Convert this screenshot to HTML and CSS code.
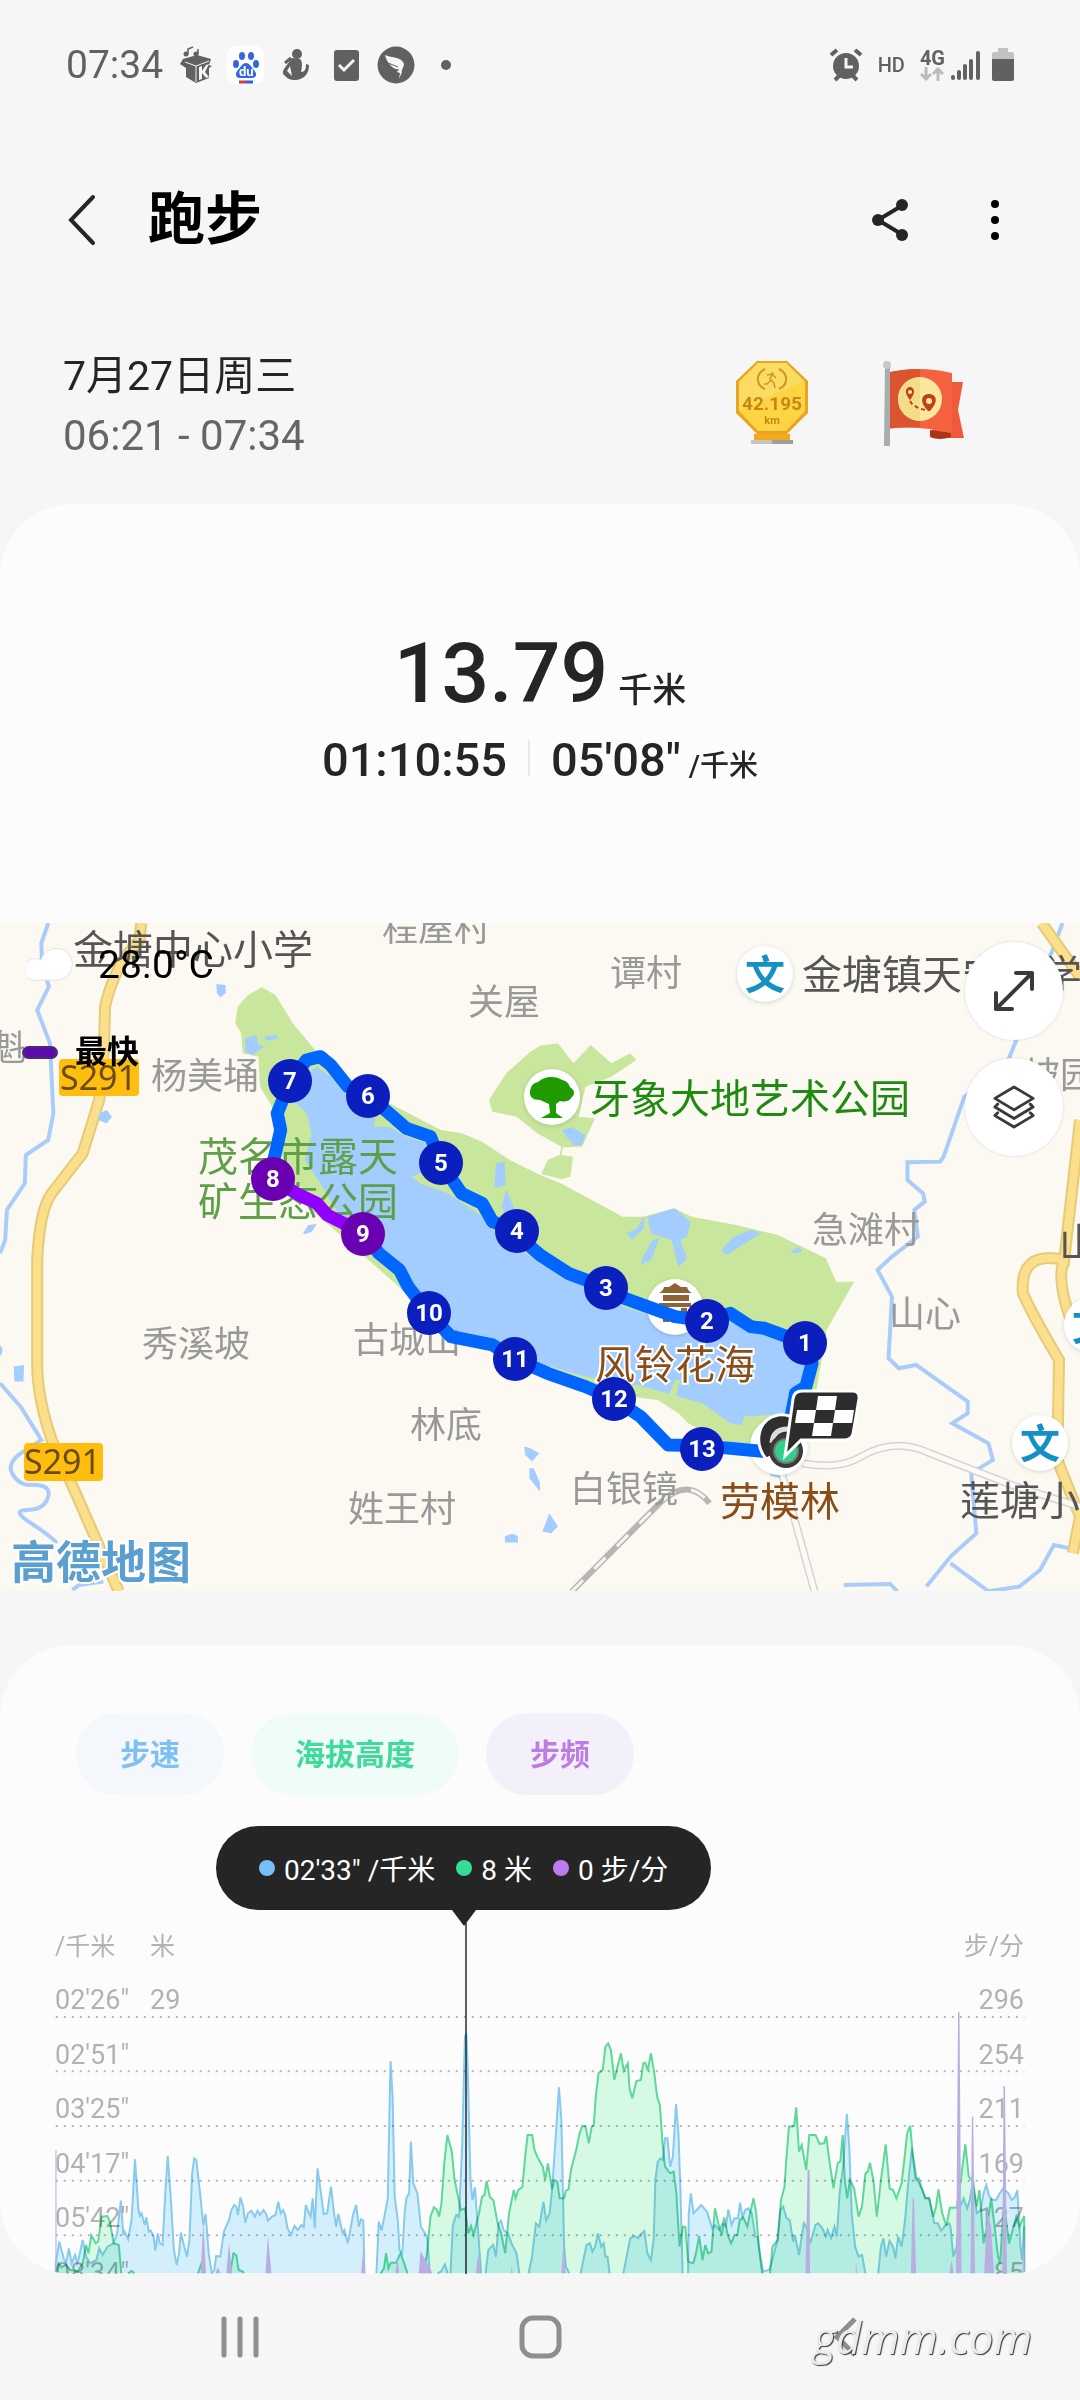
FILE: index.html
```html
<!DOCTYPE html>
<html lang="zh-CN">
<head>
<meta charset="utf-8">
<meta name="viewport" content="width=device-width, initial-scale=1">
<title>跑步</title>
<link rel="stylesheet" href="styles.css">
</head>
<body>
<div class="status">
  <span class="clock">07:34</span>
  <div class="notices">
    <svg viewBox="0 0 40 40"><g fill="#616161"><path d="M7 14l14-4 14 4-2 6 3 1-3 2v10l-13 5-10-6V23l-6-4z"/><circle cx="10" cy="9" r="2.500"/><circle cx="20" cy="9" r="2.500"/></g><path d="M12 9V4l5-2M22 9V4" fill="none" stroke="#616161" stroke-width="1.500"/><path d="M9 17l11 4 13-5M20 21v16" fill="none" stroke="#f6f6f6" stroke-width="1"/><path d="M23 22l3-1v5l4-6 3-1-4 8 4 5-3 1-4-5v6l-3 1z" fill="#f6f6f6"/></svg>
    <svg viewBox="0 0 40 40"><rect x="1" y="1" width="37" height="38" rx="9" fill="#fff"/><g fill="#3366e0"><ellipse cx="10" cy="19" rx="3" ry="4"/><ellipse cx="16" cy="11" rx="3" ry="4"/><ellipse cx="25" cy="11" rx="3" ry="4"/><ellipse cx="30" cy="19" rx="3" ry="4"/><path d="M20 18c4 0 5 4 8 7s3 8-2 8H14c-5 0-5-5-2-8s4-7 8-7z"/></g><text x="13" y="31" class="du">du</text><path d="M13 37h7" stroke="#d23c3c" stroke-width="3"/><path d="M20 37h7" stroke="#3b5fd0" stroke-width="3"/></svg>
    <svg viewBox="0 0 40 40" fill="#616161"><circle cx="21" cy="9" r="5"/><path d="M16 13l8 1c3 3 2 8 1 13 4 0 5-3 5-8l3 1c0 8-4 14-13 15-7 0-9-2-12-5-2-2-1-4 0-6z"/><path d="M9 18l6-5" stroke="#616161" stroke-width="3"/><path d="M14 21l-3 5 5 5z" fill="#f6f6f6"/></svg>
    <svg viewBox="0 0 40 40"><rect x="8" y="5" width="25" height="31" rx="3" fill="#616161"/><path d="M13 20l5 5 10-10" fill="none" stroke="#f6f6f6" stroke-width="3"/></svg>
    <svg viewBox="0 0 40 40"><circle cx="20" cy="20" r="18.500" fill="#616161"/><path d="M9 10c7 3 17 2 19 9 0 3-3 6-2 8l-3 7 1-6-3-1 1-2c-6-2-11-7-13-15z" fill="#f6f6f6"/><path d="M12 18l10 4M15 24l8 1" stroke="#616161" stroke-width="1"/></svg>
    <svg viewBox="0 0 40 40"><circle cx="20" cy="20" r="5" fill="#616161"/></svg>
  </div>
  <div class="signals">
    <svg class="alarm" viewBox="0 0 34 34"><g fill="#616161"><circle cx="17" cy="18" r="13"/></g><path d="M2 7l6-5M26 2l6 5M6 32l4-4M28 32l-4-4" stroke="#616161" stroke-width="4"/><path d="M17 10v9h7" fill="none" stroke="#f6f6f6" stroke-width="3"/></svg>
    <span>HD</span>
    <div class="net"><span>4G</span><svg viewBox="0 0 24 14"><path d="M6 0v12M1 7l5 5 5-5M18 14V2M13 7l5-5 5 5" fill="none" stroke="#bbb" stroke-width="3"/></svg></div>
    <svg class="bars" viewBox="0 0 30 30"><path d="M2 27v1M8 22v6M14 16v12M20 11v17M27 3v25" stroke="#616161" stroke-width="4" stroke-linecap="round"/></svg>
    <svg class="battery" viewBox="0 0 22 34"><path d="M6 0h10v4h4q2 0 2 2v6H0V6q0-2 2-2h4z" fill="#c2c2c2"/><path d="M0 11h22v20q0 2-2 2H2q-2 0-2-2z" fill="#616161"/></svg>
  </div>
</div>

<header class="bar">
  <button class="icon" aria-label="返回"><svg viewBox="0 0 30 52"><path d="M26 3L4 26l22 23" fill="none" stroke="#252525" stroke-width="4" stroke-linecap="round"/></svg></button>
  <h1>跑步</h1>
  <button class="icon share" aria-label="分享"><svg viewBox="0 0 40 46"><path d="M33 8L8 23l25 15" fill="none" stroke="#252525" stroke-width="4"/><g fill="#252525"><circle cx="32" cy="8" r="6"/><circle cx="8" cy="23" r="6"/><circle cx="32" cy="38" r="6"/></g></svg></button>
  <button class="icon more" aria-label="更多"><svg viewBox="0 0 10 46"><circle cx="5" cy="7" r="4"/><circle cx="5" cy="23" r="4"/><circle cx="5" cy="39" r="4"/></svg></button>
</header>

<section class="when">
  <div>
    <p class="date">7月27日周三</p>
    <p class="span">06:21 - 07:34</p>
  </div>
  <svg class="badge" viewBox="0 0 84 90">
    <path d="M22 76h36v6H22z" fill="#f5a81c"/><path d="M19 82h42v4H19z" fill="#9e9e9e"/><path d="M19 82h21v4H19z" fill="#c4c4c4"/>
    <path d="M25 3h30l21 20v32L55 76H25L4 55V23z" fill="#e9a520"/><path d="M26 5h28l19 19v29L54 73H26L7 53V24z" fill="#fdd443"/><path d="M26 5h28l18 18L7 52V24z" fill="#fbdc62"/>
    <g fill="none" stroke="#d0961e" stroke-width="2"><path d="M33 11c-10 5-9 16 0 20M47 11c10 5 9 16 0 20"/><path d="M41 14l-3 7 4 4 1 5M39 22l-4 4h-3M35 17l5-1 4 4" stroke-width="1.500"/></g>
    <text x="40" y="52" class="km-big">42.195</text><text x="40" y="66" class="km">km</text>
  </svg>
  <svg class="badge" viewBox="0 0 84 90">
    <path d="M68 24h15l-5 28 6 28H52v-7z" fill="#f0593a"/><path d="M50 72l21 3v4q-12 4-21 0z" fill="#a83518"/>
    <path d="M6 15q32-8 66 0v60q-34-8-66-4z" fill="#f5623f"/><path d="M6 15q17-4 34-4v58q-20-1-34 2z" fill="#d9542f"/>
    <circle cx="40" cy="41" r="22" fill="#fbe7a0"/><path d="M40 19a22 22 0 0 0 0 44z" fill="#f3dc8a"/>
    <g fill="#bf3f17"><path d="M30 42c-8-10-2-13 0-13s8 3 0 13zM48 53c-11-12-4-17 1-17s12 5 1 17z"/></g><circle cx="30" cy="34" r="2" fill="#fbe7a0"/><circle cx="49" cy="43" r="3" fill="#fbe7a0"/><path d="M30 43q3 6 15 9" fill="none" stroke="#bf3f17" stroke-width="2" stroke-dasharray="4 3"/>
    <path d="M5 6h5v82H4z" fill="#a9adb0"/><circle cx="7" cy="7" r="4" fill="#c4c8ca"/>
  </svg>
</section>

<main>
<section class="summary">
  <p class="distance"><b>13.79</b><span>千米</span></p>
  <p class="pace"><b>01:10:55</b><i></i><b>05'08"</b><span>/千米</span></p>
</section>

<section class="map">
  <svg class="canvas" viewBox="0 0 1080 668" preserveAspectRatio="xMidYMid slice">
    <defs>
      <path id="r1" d="M410 69L405 120Q330 200 305 320L302 450 288 600 240 760 150 880Q115 930 108 1080V1400Q110 1500 150 1620L220 1780 345 2075"/>
      <path id="r2" d="M3025 69L3136 230M3136 660L3090 1080Q2960 1050 2970 1180 3000 1250 3075 1380L3070 1680 3136 1850 3115 1960M3090 1080Q3060 1150 3136 1330"/>
    </defs>
    <g class="terrain" transform="scale(.3444 .3333) translate(0 -69)">
      <g class="river">
        <path d="M140 69L120 130 122 190 142 260 108 330 145 430 155 640 140 720 75 765 72 850 20 930 15 1020 0 1060M0 1450L60 1520 120 1620 60 1660Q20 1690 35 1720T80 1755Q150 1750 140 1790T80 1830 90 1870 165 1930M210 2070L230 2055 300 2045"/>
        <path d="M3085 69L3060 140 2920 500 2800 590 2740 770 2730 785 2635 787 2635 840 2680 880 2685 905 2655 930 2665 1010 2590 1070 2548 1110 2590 1190 2580 1375 2610 1405 2660 1395 2810 1505 2810 1540 2765 1570 2870 1630 2883 1680 2820 1720 2835 1900 2760 1970 2690 2060M2760 1990L2870 2074 2960 2060 3020 2010 3060 1935 3130 1950M2450 2055L2585 2052 2605 2074"/>
      </g>
      <g class="road edge"><use href="#r1"/><use href="#r2"/></g>
      <g class="road"><use href="#r1"/><use href="#r2"/></g>
      <path class="path" d="M2270 1720L2365 2074M2330 1690Q2440 1710 2500 1670 2600 1610 2700 1660L2950 1760 3136 1820"/><path class="path core" d="M2270 1720L2365 2074M2330 1690Q2440 1710 2500 1670 2600 1610 2700 1660L2950 1760 3136 1820"/>
      <path class="rail" d="M1660 2075L1920 1805Q2000 1730 2060 1810"/><path class="rail dash" d="M1660 2075L1920 1805Q2000 1730 2060 1810"/>
      <path class="park" d="M760 262L800 285 850 370 915 450 1000 540 1280 690 1340 700 1400 725 1480 780 1568 825 1628 850 1808 950 1868 950 1958 925 2008 950 2138 975 2258 1005 2398 1075 2428 1145 2480 1145 2400 1290 2340 1660 2250 1670 2080 1615 1998 1570 1970 1540 1910 1500 1830 1490 1700 1440 1300 1290 840 870 790 620 755 560 750 470 705 460 700 400 683 370 690 320 720 285z"/>
      <path class="park" d="M1568 437L1620 430 1665 490 1715 435 1775 490 1830 460 1848 480 1775 530 1700 560 1680 650 1728 655 1690 740 1635 742 1630 765 1664 770 1656 830 1630 838 1572 822 1590 780 1625 765 1630 740 1560 700 1500 650 1430 635 1420 600 1470 520 1540 455z"/>
      <path class="lake" d="M905 510L920 500 960 530 1010 590 1060 640 1090 655 1085 680 1130 680 1180 710 1240 730 1220 770 1250 810 1195 830 1220 850 1300 880 1400 950 1430 990 1500 1040 1568 1090 1700 1150 1810 1220 1950 1265 2130 1240 2200 1300 2280 1310 2350 1400 2310 1540 2160 1550 2155 1575 2120 1570 2040 1510 1850 1455 1700 1430 1568 1390 1430 1330 1290 1290 1200 1170 1100 1050 1000 970 930 850 885 780 905 700 890 640 850 600 880 540z"/>
      <path class="lake" d="M712 415L745 405 750 432 765 440 735 465 712 455zM765 410L800 405 810 415 775 422zM628 252L655 255 655 280 640 292 630 280zM288 640L310 630 325 650 310 670 285 660zM880 1000L895 975 920 972 905 995 885 1003zM1440 790L1465 785 1468 855 1435 865zM1470 870L1495 930 1470 950 1455 920zM1630 690L1660 682 1700 705 1690 735 1665 735zM1880 950L1958 925 2005 965 1995 1010 1975 1020 1995 1075 1970 1100 1950 1020 1920 1010 1890 1000zM1820 1000L1850 985 1870 950 1870 985 1835 1018zM1895 1020L1915 1015 1890 1080 1860 1095 1865 1075zM2095 1050L2130 1010 2180 990 2210 1000 2140 1045 2110 1065zM2295 1055L2320 1040 2330 1055 2305 1060z"/>
      <path class="lake" d="M40 1400L70 1395 68 1445 42 1445zM1522 1640L1540 1645 1566 1660 1545 1685 1525 1665zM1537 1705L1550 1705 1568 1750 1568 1775 1537 1735zM1466 1910Q1490 1895 1504 1910V1928H1466zM1575 1895L1595 1840 1620 1880 1600 1900zM0 1335Q15 1350 0 1370zM2220 1700L2260 1700 2265 1735 2240 1728z"/>
      <path class="park" d="M1960 1440L1975 1440 1960 1500 1940 1490z"/>
    </g>

    <g class="village">
      <text x="382" y="18">程屋村</text><text x="468" y="92">关屋</text><text x="-10" y="138">魁</text><text x="151" y="166">杨美埇</text><text x="610" y="63">谭村</text><text x="812" y="320">急滩村</text><text x="1024" y="165">坡园</text><text x="889" y="404">山心</text><text x="142" y="434">秀溪坡</text><text x="353" y="430">古城山</text><text x="410" y="515">林底</text><text x="348" y="599">姓王村</text><text x="570" y="579">白银镜</text>
    </g>
    <g class="poi">
      <text x="73" y="41">金塘中心小学</text><text x="802" y="66">金塘镇天宁小学</text><text x="1059" y="334">山</text><text x="960" y="592">莲塘小学</text>
      <text class="green" x="590" y="190">牙象大地艺术公园</text><text class="pale" x="198" y="248">茂名市露天</text><text class="pale" x="198" y="293">矿生态公园</text>
      <text class="brown" x="720" y="593">劳模林</text>
    </g>
    <rect x="59" y="136" width="80" height="37" rx="4" fill="#fdbe10"/><rect x="24" y="520" width="79" height="38" rx="4" fill="#fdbe10"/>
    <text class="roadno" x="60" y="167">S291</text><text class="roadno" x="24" y="551">S291</text>
    <g fill="#fff" class="disc"><circle cx="765" cy="51" r="28"/><circle cx="1040" cy="520" r="28"/><circle cx="1092" cy="402" r="28"/><circle cx="552" cy="174" r="28"/><circle cx="675" cy="384" r="28"/><circle cx="779" cy="523" r="29"/></g>
    <g class="school"><text x="745" y="66">文</text><text x="1020" y="535">文</text><text x="1072" y="417">文</text></g>
    <path d="M540 177q-11 0-10-9 1-8 8-9 6-5 13-5t11 3q6 1 8 7 7 5 2 10-4 6-12 4l-4 3v9l7 5h-22l9-5-1-9z" fill="#1f9a00"/>
    <path d="M659 370q4-2 5-6h5l6-4 6 4h6q1 4 5 6zM663 372h26v6h-26zM659 380h32v4h-32zM663 385h6v14h-6zM681 385h6v14h-6z" fill="#8f6238"/>
    <text class="poi brown halo" x="595" y="456">风铃花海</text>
    <text class="brand halo" x="11" y="656">高德地图</text>

    <g class="route" transform="scale(.3444 .3333) translate(0 -69)">
      <path d="M2280 1640L2310 1480 2340 1460 2358 1390 2338 1330 2220 1285 2180 1280 2120 1240 2054 1263 1960 1250 1880 1220 1800 1190 1761 1163 1650 1120 1568 1065 1540 1040 1502 993 1430 965 1400 910 1340 880 1281 790 1250 710 1180 685 1130 640 1070 588 1010 560 960 495 930 470 890 480 843 543 805 640 815 690 795 780 793 837"/>
      <path d="M1055 1000L1100 1060 1160 1110 1185 1160 1245 1240 1310 1310 1430 1335 1495 1377 1590 1420 1700 1460 1783 1497 1860 1550 1940 1635 2038 1637 2220 1655"/>
      <path class="fast" d="M793 837L860 880 920 910 950 945 1055 1000"/>
    </g>
    <g class="pins">
      <circle cx="805" cy="420" r="22"/><circle cx="707" cy="398" r="22"/><circle cx="606" cy="365" r="22"/><circle cx="517" cy="308" r="22"/><circle cx="441" cy="240" r="22"/><circle cx="368" cy="173" r="22"/><circle cx="290" cy="158" r="22"/><circle class="fast" cx="273" cy="256" r="22"/><circle class="fast" cx="363" cy="311" r="22"/><circle cx="429" cy="390" r="22"/><circle cx="515" cy="436" r="22"/><circle cx="614" cy="476" r="22"/><circle cx="702" cy="526" r="22"/>
      <text x="805" y="428">1</text><text x="707" y="406">2</text><text x="606" y="373">3</text><text x="517" y="316">4</text><text x="441" y="248">5</text><text x="368" y="181">6</text><text x="290" y="166">7</text><text x="273" y="264">8</text><text x="363" y="319">9</text><text x="429" y="398">10</text><text x="515" y="444">11</text><text x="614" y="484">12</text><text x="702" y="534">13</text>
    </g>
    <path d="M766 536c-13-17-8-40 12-44 15-2 27 9 29 25z" fill="#2f2f2f" stroke="#fff" stroke-width="3"/>
    <path d="M772 520q1-14 16-14" fill="none" stroke="#ddd" stroke-width="5"/>
    <circle cx="786" cy="528" r="17" fill="#3a3a3a"/><circle cx="786" cy="528" r="12" fill="#2fd08a" stroke="#777" stroke-width="2"/>
    <path d="M802 468h50q8 0 7 8l-6 35q-2 6-9 6h-43l-16 16 8-57q1-8 9-8z" fill="#2d2d2d" stroke="#fff" stroke-width="3"/>
    <path d="M818 473h19l-2 14h-19zM797 487h19l-2 13h-19zM835 487h19l-2 13h-19zM814 500h19l-2 13h-19z" fill="#fff"/>
  </svg>

  <div class="weather"><svg viewBox="0 0 46 34"><path d="M12 32a11 11 0 1 1 2-20 16 16 0 1 1 18 20z" fill="#fff" stroke="#e3e3e3"/></svg><span>28.0°C</span></div>
  <div class="legend"><i></i><span>最快</span></div>
  <div class="tools">
    <button aria-label="全屏"><svg viewBox="0 0 44 44"><path d="M4 40L40 4M24 4h16v16M4 24v16h16" fill="none" stroke="#3a3a3a" stroke-width="4" stroke-linecap="round" stroke-linejoin="round"/></svg></button>
    <button aria-label="图层"><svg viewBox="0 0 44 46"><path d="M22 2l20 12-20 12L2 14zM5 20l-3 3 20 12 20-12-3-3M5 29l-3 3 20 12 20-12-3-3" fill="none" stroke="#3a3a3a" stroke-width="3" stroke-linejoin="round" stroke-linecap="round"/></svg></button>
  </div>
</section>

<section class="trends">
  <div class="chips">
    <button class="speed">步速</button><button class="height">海拔高度</button><button class="cadence">步频</button>
  </div>
  <div class="plot">
    <div class="row units"><span>/千米</span><span>米</span><span>步/分</span></div>
    <div class="ticks">
      <div class="row"><span>02'26"</span><span>29</span><span>296</span></div>
      <div class="row"><span>02'51"</span><span></span><span>254</span></div>
      <div class="row"><span>03'25"</span><span></span><span>211</span></div>
      <div class="row"><span>04'17"</span><span></span><span>169</span></div>
      <div class="row"><span>05'42"</span><span></span><span>127</span></div>
      <div class="row"><span>08'34"</span><span></span><span>85</span></div>
    </div>
    <svg class="series" viewBox="0 0 3136 882" preserveAspectRatio="none">
      <path class="gridline" d="M162 111H2974M162 274H2974M162 438H2974M162 602H2974M162 766H2974"/>
      <g class="alt">
        <path d="M162 880L170 850 178 862 190 855 205 870 225 875 240 850 250 795 257 820 265 765 278 790 285 785 295 710 312 708 320 730 330 790 345 795 352 880M372 880L382 873 390 880M575 880L585 850 592 880M668 880L678 820 686 825 693 870 705 875 708 880M1105 880L1115 865 1121 820 1128 865 1135 848 1150 848 1163 820 1172 845 1183 880"/>
        <path d="M1230 880L1240 820 1250 710 1260 682 1268 688 1275 710 1282 670 1290 550 1299 465 1312 515 1320 600 1330 650 1338 690 1350 685 1360 760 1368 738 1375 765 1390 705 1400 650 1407 645 1413 603 1422 650 1433 662 1445 730 1455 760 1467 820 1478 700 1490 640 1492 630 1497 655 1505 630 1517 620 1525 530 1532 465 1545 465 1552 510 1560 530 1568 545 1576 560 1583 600 1591 550 1603 628 1610 600 1618 605 1625 655 1638 655 1643 632 1651 628 1658 570 1673 510 1683 460 1691 438 1700 440 1710 490 1718 440 1724 436 1730 350 1738 280 1750 270 1758 200 1766 190 1774 210 1784 300 1793 260 1803 220 1811 272 1823 250 1828 325 1836 355 1848 303 1861 300 1868 250 1874 248 1881 272 1890 220 1900 280 1908 350 1916 375 1923 480 1931 560 1946 580 1956 575 1964 640 1973 800 1983 740 1990 740 1998 845 2013 850 2021 820 2030 768 2040 840 2048 795 2056 820 2066 815 2076 685 2088 740 2096 765 2103 712 2113 765 2123 790 2133 765 2141 765 2148 720 2158 712 2170 740 2178 700 2188 655 2196 700 2203 800 2213 880"/>
        <path d="M2236 880L2243 800 2258 780 2268 660 2278 620 2283 540 2291 440 2306 438 2312 382 2320 515 2328 495 2341 570 2350 465 2368 465 2380 492 2393 490 2399 468 2408 540 2420 625 2433 548 2440 545 2447 465 2453 600 2460 655 2468 600 2480 625 2493 710 2503 680 2513 580 2520 575 2526 548 2536 600 2546 710 2558 600 2572 493 2583 625 2593 630 2603 655 2618 610 2628 520 2634 460 2643 438 2650 520 2660 590 2678 630 2686 655 2698 655 2710 710 2718 680 2725 628 2736 700 2748 738 2758 683 2778 683 2790 600 2803 493 2813 590 2823 600 2836 680 2844 630 2856 790 2866 740 2878 655 2888 740 2898 830 2904 850 2913 700 2920 710 2930 790 2943 740 2951 710 2960 740 2974 708 2974 880"/>
      </g>
      <g class="spd">
        <path d="M162 880V850L172 785 185 835 192 850 200 805 208 850 218 825 225 850 232 820 240 780 250 830 262 850 280 840 288 805 298 825 312 800 330 790 340 760 351 662 358 765 362 755 372 778 382 720 392 538 402 690 406 708 411 700 420 735 425 712 432 755 438 752 446 770 451 812 458 760 464 790 472 795 480 640 487 528 495 640 505 810 513 855 520 820 525 758 535 800 543 830 550 780 558 580 564 535 570 540 582 650 590 735 597 702 606 820 615 880 622 870 628 828 640 830 650 755 665 720 672 690 680 675 686 680 691 705 698 652 706 680 712 728 720 700 730 692 740 710 748 692 755 705 765 690 772 700 778 722 790 710 800 705 808 665 815 700 822 690 828 705 835 745 845 765 855 738 865 750 875 735 882 742 888 675 895 695 902 710 908 655 914 745 922 565 932 640 940 702 950 700 961 620 970 700 976 740 982 702 995 760 1000 750 1010 790 1025 705 1034 675 1042 740 1048 718 1055 722 1058 880"/>
        <path d="M1093 880L1100 725 1108 752 1118 700 1126 655 1130 450 1134 243 1140 350 1146 650 1155 720 1160 810 1168 820 1175 700 1180 655 1188 640 1193 485 1200 610 1212 640 1222 740 1240 770 1248 880M1270 880L1280 875 1292 853 1300 880M1308 880L1315 735 1325 705 1333 710 1342 500 1350 170 1354 160 1358 260 1366 600 1372 660 1379 622 1388 750 1397 880M1410 880L1418 810 1432 795 1440 830 1448 730 1455 722 1462 750 1475 760 1485 790 1500 820 1508 880M1535 880L1545 830 1556 730 1566 740 1578 665 1586 722 1596 700 1603 630 1613 480 1623 322 1630 420 1638 800 1643 860 1653 880M1686 880L1703 795 1713 790 1720 815 1728 800 1736 760 1746 800 1753 790 1758 830 1764 830 1770 880M1810 880L1830 775 1843 768 1853 775 1858 765 1871 753 1880 820 1890 840 1898 780 1903 600 1910 545 1918 535 1925 540 1931 475 1938 475 1946 560 1954 530 1963 372 1970 460 1976 640 1982 880"/>
        <path d="M1998 880L2000 700 2006 640 2014 700 2023 690 2036 675 2053 695 2068 745 2076 735 2088 750 2098 730 2108 740 2115 688 2124 735 2133 715 2143 715 2149 668 2156 712 2164 690 2173 685 2183 700 2193 770 2200 770 2208 830 2216 875 2233 870 2240 850 2258 780 2266 690 2274 680 2284 715 2293 720 2303 785 2308 765 2320 825 2328 770 2334 730 2343 745 2353 790 2368 735 2376 730 2388 745 2398 770 2403 750 2413 775 2423 740 2430 770 2438 640 2448 560 2459 402 2466 500 2473 700 2483 800 2493 830 2503 825 2513 880M2550 880L2558 800 2565 775 2573 830 2583 782 2593 800 2600 835 2608 770 2618 800 2628 720 2638 600 2648 505 2658 600 2668 595 2678 630 2688 655 2698 655 2713 730 2723 730 2733 752 2746 735 2756 730 2760 740 2768 830 2778 800 2788 680 2798 655 2808 685 2816 660 2826 600 2836 700 2848 690 2856 640 2864 615 2873 650 2883 660 2893 660 2903 640 2913 625 2928 640 2938 660 2948 650 2954 630 2963 800 2968 840 2974 740V880"/>
      </g>
      <path class="cad" d="M161 880V510H164V880zM583 880L590 720 598 880zM626 880L632 862 641 880zM657 880L665 788 674 880zM771 880L778 765 788 880zM1049 880L1055 805 1061 880zM1148 880L1154 830 1159 880zM1216 880L1221 812 1238 845 1256 880zM1382 880L1388 820 1396 880zM1484 880L1486 855 1488 880zM1630 880L1636 790 1642 880zM2339 880L2345 570 2351 570 2352 880zM2484 880L2486 845 2488 880zM2645 880L2650 655 2654 655 2660 880zM2757 880L2763 840 2769 880zM2776 880L2782 95 2786 95 2792 880zM2818 880L2822 410 2826 410 2831 880zM2858 880L2866 690 2878 740 2886 880zM2910 880L2914 318 2918 318 2924 880zM2969 880L2974 730 2976 880z"/>
    </svg>
    <div class="cursor"></div>
    <div class="tip"><span class="b">02'33" /千米</span><span class="g">8 米</span><span class="p">0 步/分</span></div>
  </div>
</section>
</main>

<nav class="keys">
  <button aria-label="最近"><svg viewBox="0 0 44 44"><path d="M6 4v36M22 4v36M38 4v36" stroke="#8e8e8e" stroke-width="5" stroke-linecap="round"/></svg></button>
  <button aria-label="主页"><svg viewBox="0 0 44 44"><rect x="4" y="3" width="37" height="38" rx="11" fill="none" stroke="#8e8e8e" stroke-width="5"/></svg></button>
  <button aria-label="后退"><svg viewBox="0 0 44 44"><path d="M37 4L19 22l18 18" fill="none" stroke="#8e8e8e" stroke-width="5"/></svg></button>
  <span class="mark">gdmm.com</span>
</nav>
</body>
</html>
```
FILE: styles.css
```css
* { box-sizing: border-box; }
body {
  margin: 0;
  background: #f6f6f6;
  color: #252525;
  font-family: Roboto, "Noto Sans CJK SC", sans-serif;
}
p, h1 { margin: 0; }
button { border: 0; padding: 0; background: none; font: inherit; color: inherit; }
svg { display: block; }

.status { display: flex; align-items: center; height: 130px; padding: 0 66px; color: #616161; }
.clock { font-size: 39px; width: 110px; }
.notices { display: flex; gap: 10px; }
.notices svg { width: 40px; height: 40px; }
.du { font: bold 13px Roboto, sans-serif; fill: #fff; }
.signals { display: flex; align-items: center; gap: 15px; margin-left: auto; font-size: 20px; font-weight: 500; }
.alarm { width: 34px; height: 34px; }
.net { margin-right: -9px; font-weight: 700; line-height: 18px; }
.net svg { width: 24px; height: 14px; }
.bars { width: 30px; height: 30px; }
.battery { width: 22px; height: 34px; margin-left: -4px; }

.bar { display: flex; align-items: center; height: 182px; padding: 0 79px 2px 67px; }
.icon svg { width: 30px; height: 52px; }
h1 { font-size: 57px; line-height: 72px; font-weight: 700; margin: 0 auto 0 51px; color: #000; }
.share svg { width: 40px; height: 46px; }
.more { margin-left: 79px; }
.more svg { width: 12px; height: 46px; }

.when { display: flex; align-items: center; height: 192px; padding: 0 116px 4px 63px; }
.when div { margin-right: auto; }
.when p { line-height: 60px; }
.date { font-size: 41px; }
.span { font-size: 42px; color: #666; }
.badge { width: 84px; height: 90px; margin-bottom: 6px; }
.badge + .badge { margin-left: 64px; }
.km-big { font: bold 19px Roboto, sans-serif; fill: #c98712; text-anchor: middle; }
.km { font: bold 11px Roboto, sans-serif; fill: #c98712; text-anchor: middle; }

.summary { background: #fcfcfc; border-radius: 72px 72px 0 0; padding: 120px 0 133px; font-weight: 500; }
.summary p { display: flex; justify-content: center; align-items: baseline; }
.summary b { font-weight: 500; }
.distance { height: 100px; gap: 10px; margin-bottom: 6px; font-size: 34px; line-height: 40px; }
.distance b { font-size: 84px; line-height: 100px; }
.pace { height: 60px; font-size: 29px; line-height: 40px; }
.pace b { font-size: 47px; line-height: 60px; }
.pace i { width: 2px; height: 36px; margin: 0 21px; background: #e8e8e8; }
.pace span { margin-left: 8px; }

.map { position: relative; height: 668px; overflow: hidden; background: #fcf9f2; }
.canvas { width: 100%; height: 100%; font-family: "Noto Sans CJK SC", sans-serif; }
.canvas path, .canvas use { vector-effect: non-scaling-stroke; }
.river path { fill: none; stroke: #a9cdf8; stroke-width: 4px; }
.road { fill: none; stroke: #fbdf8c; stroke-width: 8px; }
.road.edge { stroke: #e6cb77; stroke-width: 12px; }
.path { fill: none; stroke: #d6d3d0; stroke-width: 8px; }
.path.core { stroke: #fcfaf6; stroke-width: 5px; }
.rail { fill: none; stroke: #b8b5b5; stroke-width: 6px; }
.rail.dash { stroke: #f6f3f0; stroke-width: 3px; stroke-dasharray: 16 16; }
.park { fill: #c8e69c; }
.lake { fill: #a3ccff; }
.village text { font-size: 36px; font-weight: 400; fill: #999; }
.poi, .poi text { font-size: 40px; font-weight: 400; fill: #555; }
.poi .green { fill: #1f8a10; }
.poi .pale { fill: #5f9f48; }
.poi .brown, .poi.brown { fill: #8a4d18; }
.halo { paint-order: stroke; stroke: #fff; stroke-width: 4px; }
.roadno { font: 34px "Noto Sans", sans-serif; fill: #6b4b12; }
.disc { filter: drop-shadow(0 1px 2px rgba(0, 0, 0, .15)); }
.school text { font-size: 40px; font-weight: 700; fill: #1590c4; }
.brand { font-size: 45px; font-weight: 700; fill: #5b9fd0; }
.route path { fill: none; stroke: #0066ff; stroke-width: 13px; stroke-linejoin: round; stroke-linecap: round; }
.route .fast { stroke: #9100ff; }
.pins circle { fill: #0a1fbd; }
.pins .fast { fill: #6900b2; }
.pins text { font: bold 24px Roboto, sans-serif; fill: #fff; text-anchor: middle; }

.weather { position: absolute; top: 20px; left: 27px; display: flex; align-items: center; gap: 25px; font-size: 39px; line-height: 44px; color: #000; }
.weather svg { width: 46px; height: 34px; }
.legend { position: absolute; top: 106px; left: 22px; display: flex; align-items: center; gap: 17px; font-size: 32px; font-weight: 700; line-height: 46px; color: #000; }
.legend i { width: 36px; height: 13px; border: 2px solid #4b2a78; border-radius: 7px; background: #5c0cab; }
.tools { position: absolute; top: 19px; right: 17px; display: grid; gap: 18px; }
.tools button { display: grid; place-items: center; width: 98px; height: 98px; border-radius: 50%; background: #fff; box-shadow: 0 0 3px rgba(0, 0, 0, .15); }
.tools svg { width: 44px; height: 44px; }

.trends { margin-top: 54px; padding-top: 68px; background: #fcfcfc; border-radius: 72px; overflow: hidden; }
.chips { display: flex; gap: 27px; padding-left: 76px; }
.chips button { height: 82px; padding: 0 44px 4px; border-radius: 41px; font-size: 30px; font-weight: 700; }
.speed { background: #f4f8fc; color: #7fc0f2; }
.height { background: #f0fcf8; color: #40da9a; }
.cadence { background: #f4f0fa; color: #bb7de4; }

.plot { position: relative; height: 479px; padding-top: 124px; color: #b2b2b2; font-size: 27px; }
.row { display: flex; align-items: center; padding: 0 56px 0 55px; }
.row span:first-child { width: 95px; }
.row span:last-child { margin-left: auto; }
.units { height: 54px; padding-bottom: 4px; font-size: 25px; }
.ticks { display: grid; grid-template-rows: repeat(6, 1fr); height: 327px; }
.series { position: absolute; left: 0; bottom: 0; width: 100%; height: 294px; }
.series path { vector-effect: non-scaling-stroke; }
.gridline { fill: none; stroke: #b4b4b4; stroke-width: 2px; stroke-dasharray: 2 6; }
.alt path { fill: rgba(60, 240, 130, .2); stroke: #5edb9c; stroke-width: 2px; }
.spd path { fill: rgba(90, 205, 255, .25); stroke: #8acdf0; stroke-width: 2px; }
.alt, .spd { mix-blend-mode: multiply; }
.cad { fill: #b9aee2; }
.cursor { position: absolute; left: 43.1%; top: 128px; bottom: 0; width: 2px; background: rgba(20, 30, 40, .7); }
.tip { position: absolute; left: 20%; top: 31px; display: flex; align-items: center; gap: 21px; height: 84px; padding: 0 43px; border-radius: 42px; background: #252525; color: #fff; font-size: 28px; white-space: nowrap; }
.tip::after { content: ""; position: absolute; left: 50%; top: 100%; margin-left: -12px; border: 12px solid transparent; border-top: 16px solid #252525; border-bottom: 0; }
.tip span { display: flex; align-items: center; gap: 9px; }
.tip span::before { content: ""; width: 16px; height: 16px; border-radius: 50%; background: #78bffa; }
.tip .g::before { background: #34dc94; }
.tip .p::before { background: #bd7bf0; }

.keys { position: relative; display: grid; grid-template-columns: repeat(3, 1fr); height: 126px; padding: 0 90px; }
.keys button { display: grid; place-items: center; }
.keys svg { width: 44px; height: 44px; }
.mark { position: absolute; right: 48px; bottom: 35px; font: italic 44px/56px "Open Sans", "Noto Sans", sans-serif; color: #ececec; text-shadow: 1px 1px 1px #333; }
```
